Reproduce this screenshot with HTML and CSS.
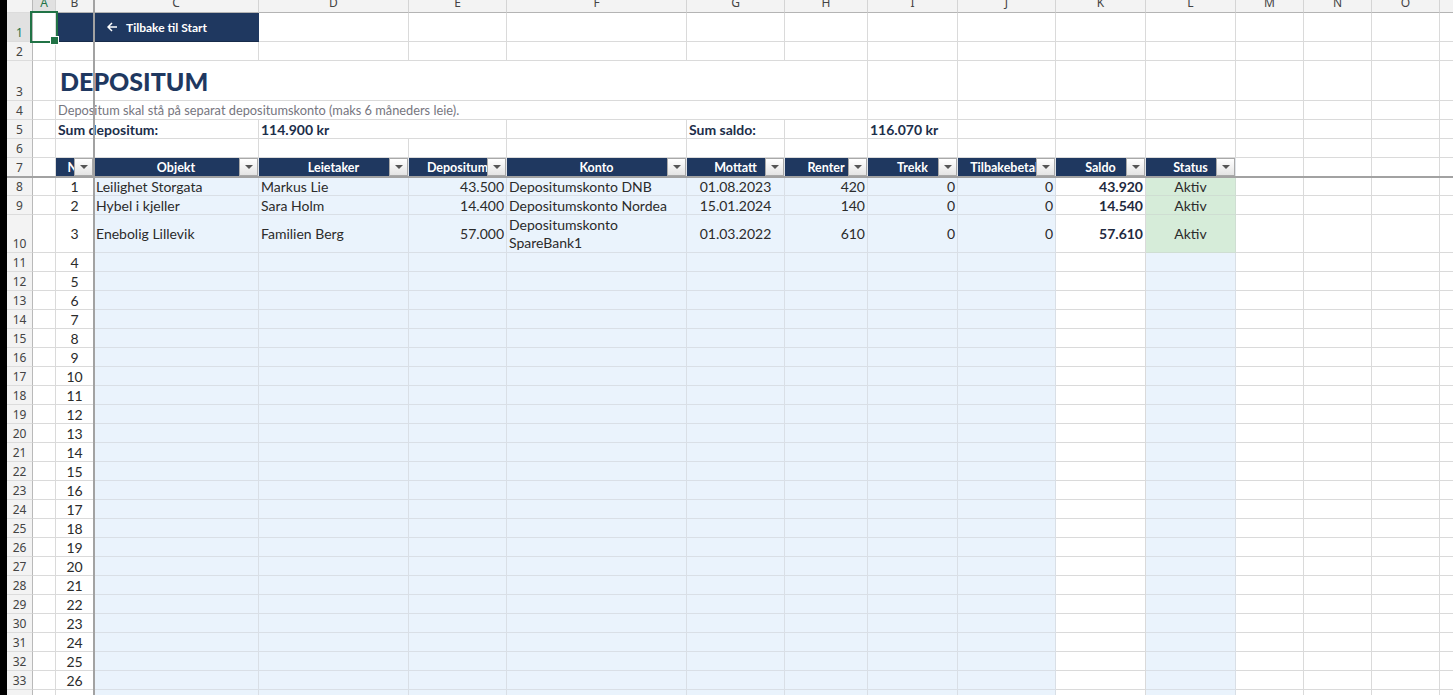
FILE: index.html
```html
<!DOCTYPE html>
<html lang="no">
<head>
    <meta charset="UTF-8">
    <meta name="viewport" content="width=device-width, initial-scale=1.0">
    <title>Depositum</title>
    <link rel="stylesheet" href="styles.css">
</head>
<body>
<div class="page">
    <div class="edge"></div>
    <div class="sheet" id="sheet">

        <div class="row colhead">
            <div class="rh"></div>
            <div class="a on"><span>A</span></div>
            <div class="b"><span>B</span></div>
            <div class="c"><span>C</span></div>
            <div class="d"><span>D</span></div>
            <div class="e"><span>E</span></div>
            <div class="f"><span>F</span></div>
            <div class="g"><span>G</span></div>
            <div class="h"><span>H</span></div>
            <div class="i"><span>I</span></div>
            <div class="j"><span>J</span></div>
            <div class="k"><span>K</span></div>
            <div class="l"><span>L</span></div>
            <div class="m"><span>M</span></div>
            <div class="n"><span>N</span></div>
            <div class="o"><span>O</span></div>
            <div class="p"><span>P</span></div>
        </div>

        <div class="row r1">
            <div class="rh on">1</div>
            <div class="a"></div>
            <div class="bc back">
                <svg width="11" height="10" viewBox="0 0 11 10"><path d="M10 5H1.5M5 1L1 5l4 4" fill="none" stroke="#fff" stroke-width="1.5"/></svg>
                Tilbake til Start
            </div>
            <div class="d"></div><div class="e"></div><div class="f"></div><div class="g"></div><div class="h"></div>
            <div class="i"></div><div class="j"></div><div class="k"></div><div class="l"></div>
            <div class="m"></div><div class="n"></div><div class="o"></div><div class="p"></div>
        </div>

        <div class="row">
            <div class="rh">2</div>
            <div class="a"></div><div class="b"></div><div class="c"></div><div class="d"></div><div class="e"></div>
            <div class="f"></div><div class="g"></div><div class="h"></div><div class="i"></div><div class="j"></div>
            <div class="k"></div><div class="l"></div><div class="m"></div><div class="n"></div><div class="o"></div><div class="p"></div>
        </div>

        <div class="row r3">
            <div class="rh">3</div>
            <div class="a"></div>
            <div class="bh title">DEPOSITUM</div>
            <div class="i"></div><div class="j"></div><div class="k"></div><div class="l"></div>
            <div class="m"></div><div class="n"></div><div class="o"></div><div class="p"></div>
        </div>

        <div class="row">
            <div class="rh">4</div>
            <div class="a"></div>
            <div class="bh note">Depositum skal stå på separat depositumskonto (maks 6 måneders leie).</div>
            <div class="i"></div><div class="j"></div><div class="k"></div><div class="l"></div>
            <div class="m"></div><div class="n"></div><div class="o"></div><div class="p"></div>
        </div>

        <div class="row">
            <div class="rh">5</div>
            <div class="a"></div>
            <div class="bc sum">Sum depositum:</div>
            <div class="de sum">114.900 kr</div>
            <div class="f"></div>
            <div class="g sum">Sum saldo:</div>
            <div class="h"></div>
            <div class="i sum">116.070 kr</div>
            <div class="j"></div><div class="k"></div><div class="l"></div>
            <div class="m"></div><div class="n"></div><div class="o"></div><div class="p"></div>
        </div>

        <div class="row">
            <div class="rh">6</div>
            <div class="a"></div><div class="b"></div><div class="c"></div><div class="d"></div><div class="e"></div>
            <div class="f"></div><div class="g"></div><div class="h"></div><div class="i"></div><div class="j"></div>
            <div class="k"></div><div class="l"></div><div class="m"></div><div class="n"></div><div class="o"></div><div class="p"></div>
        </div>

        <div class="row">
            <div class="rh">7</div>
            <div class="a"></div>
            <div class="b th">Nr<i class="flt"></i></div>
            <div class="c th">Objekt<i class="flt"></i></div>
            <div class="d th">Leietaker<i class="flt"></i></div>
            <div class="e th">Depositum<i class="flt"></i></div>
            <div class="f th">Konto<i class="flt"></i></div>
            <div class="g th">Mottatt<i class="flt"></i></div>
            <div class="h th">Renter<i class="flt"></i></div>
            <div class="i th">Trekk<i class="flt"></i></div>
            <div class="j th">Tilbakebetalt<i class="flt"></i></div>
            <div class="k th">Saldo<i class="flt"></i></div>
            <div class="l th">Status<i class="flt"></i></div>
            <div class="m"></div><div class="n"></div><div class="o"></div><div class="p"></div>
        </div>

        <div class="row">
            <div class="rh">8</div>
            <div class="a"></div>
            <div class="b mid">1</div>
            <div class="c tb">Leilighet Storgata</div>
            <div class="d tb">Markus Lie</div>
            <div class="e tb right">43.500</div>
            <div class="f tb">Depositumskonto DNB</div>
            <div class="g tb mid">01.08.2023</div>
            <div class="h tb right">420</div>
            <div class="i tb right">0</div>
            <div class="j tb right">0</div>
            <div class="k saldo">43.920</div>
            <div class="l ok">Aktiv</div>
            <div class="m"></div><div class="n"></div><div class="o"></div><div class="p"></div>
        </div>

        <div class="row">
            <div class="rh">9</div>
            <div class="a"></div>
            <div class="b mid">2</div>
            <div class="c tb">Hybel i kjeller</div>
            <div class="d tb">Sara Holm</div>
            <div class="e tb right">14.400</div>
            <div class="f tb">Depositumskonto Nordea</div>
            <div class="g tb mid">15.01.2024</div>
            <div class="h tb right">140</div>
            <div class="i tb right">0</div>
            <div class="j tb right">0</div>
            <div class="k saldo">14.540</div>
            <div class="l ok">Aktiv</div>
            <div class="m"></div><div class="n"></div><div class="o"></div><div class="p"></div>
        </div>

        <div class="row r10">
            <div class="rh">10</div>
            <div class="a"></div>
            <div class="b mid">3</div>
            <div class="c tb">Enebolig Lillevik</div>
            <div class="d tb">Familien Berg</div>
            <div class="e tb right">57.000</div>
            <div class="f tb wrap">Depositumskonto<br>SpareBank1</div>
            <div class="g tb mid">01.03.2022</div>
            <div class="h tb right">610</div>
            <div class="i tb right">0</div>
            <div class="j tb right">0</div>
            <div class="k saldo">57.610</div>
            <div class="l ok">Aktiv</div>
            <div class="m"></div><div class="n"></div><div class="o"></div><div class="p"></div>
        </div>

    </div>

    <div class="freeze-v"></div>
    <div class="freeze-h"></div>
    <div class="cursor"></div>
    <div class="handle"></div>
</div>

<script>
    // empty table rows 11 and down
    var sheet = document.getElementById("sheet");
    var html = "";
    for (var n = 11; n <= 34; n++) {
        html += '<div class="row">' +
            '<div class="rh">' + n + '</div><div class="a"></div>' +
            '<div class="b mid">' + (n - 7) + '</div>' +
            '<div class="c tb"></div><div class="d tb"></div><div class="e tb"></div><div class="f tb"></div>' +
            '<div class="g tb"></div><div class="h tb"></div><div class="i tb"></div><div class="j tb"></div>' +
            '<div class="k"></div><div class="l tb"></div>' +
            '<div class="m"></div><div class="n"></div><div class="o"></div><div class="p"></div>' +
            '</div>';
    }
    sheet.insertAdjacentHTML("beforeend", html);
</script>
</body>
</html>
```

FILE: styles.css
```css
* {
    box-sizing: border-box;
}
body {
    margin: 0;
    overflow: hidden;
    background: #fff;
    font-family: Lato, "Liberation Sans", sans-serif;
    font-size: 14px;
    color: #2b2b2b;
}
.page {
    display: flex;
    height: 695px;
    position: relative;
    overflow: hidden;
}
.edge {
    width: 7px;
    flex: none;
    background: #000;
}
.sheet {
    flex: none;
    width: 1500px;
}
.row {
    display: flex;
    height: 19px;
}
.row > div {
    flex: none;
    display: flex;
    align-items: center;
    padding: 0 2px;
    border-right: 1px solid #dadada;
    border-bottom: 1px solid #dadada;
    white-space: nowrap;
    overflow: hidden;
    position: relative;
}
.r1 { height: 29px; }
.r3 { height: 40px; }
.r10 { height: 38px; }

/* column widths */
.rh { width: 26px; }
.a { width: 23px; }
.b { width: 38px; }
.c { width: 165px; }
.d { width: 150px; }
.e { width: 98px; }
.f { width: 180px; }
.g { width: 98px; }
.h { width: 83px; }
.i { width: 90px; }
.j { width: 98px; }
.k { width: 90px; }
.l { width: 90px; }
.m, .n, .o, .p { width: 68px; }
.bc { width: 203px; }
.de { width: 248px; }
.bh { width: 812px; }

/* headers */
.row > .rh {
    background: #f3f3f3;
    border-right-color: #b9b9b9;
    border-bottom-color: #dcdcdc;
    justify-content: center;
    align-items: flex-end;
    padding: 0;
    line-height: 17px;
    font-family: "Noto Sans", sans-serif;
    font-size: 12px;
    color: #444;
}
.colhead {
    height: 13px;
}
.colhead > div {
    background: #f3f3f3;
    border-bottom-color: #b4b4b4;
    border-right-color: #d4d4d4;
    justify-content: center;
    font-family: "Noto Sans", sans-serif;
    font-size: 12px;
    color: #444;
}
.colhead span {
    display: block;
    line-height: 13px;
    margin-top: -7px;
}
.row > .on {
    background: #e1e1e1;
    color: #217346;
}

/* top area */
.row > .back {
    background: #1f3860;
    border-right-color: #1f3860;
    border-bottom-color: #172b4a;
    color: #fff;
    font-weight: bold;
    font-size: 12px;
    justify-content: center;
    gap: 8px;
}
.row > .title {
    padding-left: 4px;
    font-size: 25px;
    font-weight: 900;
    color: #1f3860;
    border-right-color: #dadada;
}
.note {
    font-size: 12.8px;
    color: #767680;
}
.sum {
    font-weight: bold;
    color: #1c2e4a;
}

/* table */
.row > .th {
    background: #1f3860;
    color: #fff;
    font-weight: bold;
    font-size: 12.5px;
    justify-content: center;
    border-right-color: #dfe3e8;
}
.flt {
    position: absolute;
    top: 0;
    right: 0;
    width: 19px;
    height: 18px;
    border: 1px solid #a9a9a9;
    background: linear-gradient(#ffffff, #e4e4e4);
}
.flt::after {
    content: "";
    position: absolute;
    left: 5px;
    top: 6px;
    border-left: 4px solid transparent;
    border-right: 4px solid transparent;
    border-top: 4px solid #555;
}
.row > .tb {
    background: #eaf3fc;
    border-right-color: #d9dfe6;
    border-bottom-color: #d9dfe6;
}
.mid {
    justify-content: center;
}
.right {
    justify-content: flex-end;
}
.wrap {
    white-space: normal;
    line-height: 18px;
}
.saldo {
    justify-content: flex-end;
    font-weight: bold;
    color: #1f2a40;
}
.row > .ok {
    background: #d6ecd9;
    border-right-color: #cfded2;
    border-bottom-color: #cfded2;
    justify-content: center;
}

/* frozen panes and selection */
.freeze-v {
    position: absolute;
    left: 93px;
    top: 0;
    width: 2px;
    height: 100%;
    background: #a2a2a2;
}
.freeze-h {
    position: absolute;
    left: 7px;
    right: 0;
    top: 176px;
    height: 2px;
    background: #a2a2a2;
}
.cursor {
    position: absolute;
    left: 30px;
    top: 11px;
    width: 28px;
    height: 32px;
    border: 2px solid #217346;
}
.handle {
    position: absolute;
    left: 50px;
    top: 36px;
    width: 9px;
    height: 9px;
    background: #217346;
    border: 1px solid #fff;
}
```
